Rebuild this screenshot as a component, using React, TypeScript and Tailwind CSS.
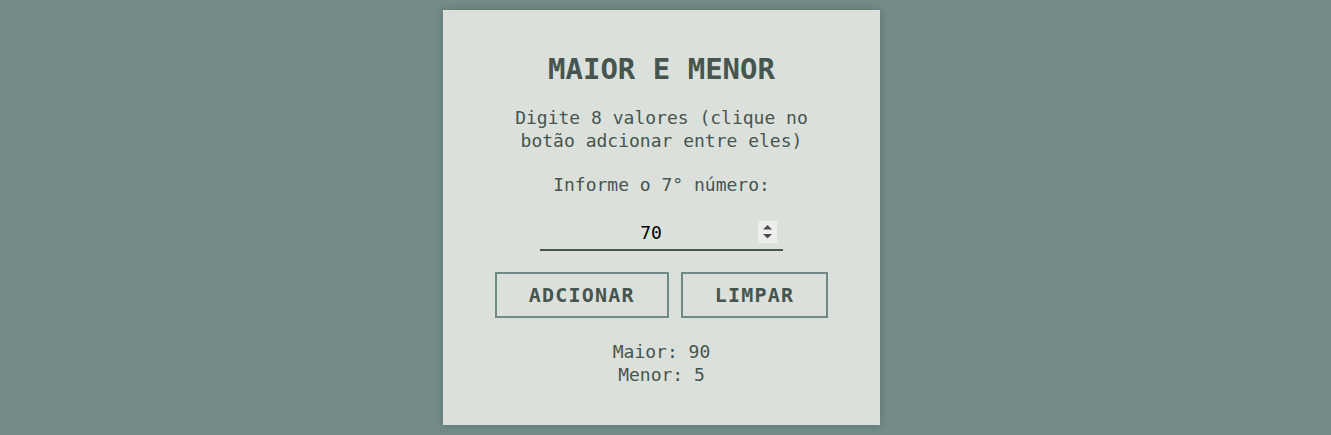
import { useState } from 'react'

const MONO = { fontFamily: '"DejaVu Sans Mono", "Liberation Mono", monospace' }

function Spinner() {
  return (
    <div className="w-[19px] h-[22px] bg-[#eeeeee] flex items-center justify-center mr-[6px] mb-[6px] shrink-0">
      <svg width="19" height="22" viewBox="0 0 19 22">
        <path d="M9.5 4 L14 8.5 L5 8.5 Z" fill="#4d4d4d" />
        <path d="M5 13 L14 13 L9.5 17.5 Z" fill="#4d4d4d" />
      </svg>
    </div>
  )
}

export default function App() {
  const [valor, setValor] = useState('70')
  const maior = 90
  const menor = 5

  return (
    <div className="min-h-screen bg-[#738c87] flex justify-center pr-2 pt-[10px]" style={MONO}>
      <div className="w-[437px] h-[415px] bg-[#dce0db] shadow-[0_0_8px_rgba(0,0,0,0.2)] flex flex-col items-center pt-[42px] text-[#46554f]">
        <h1 className="text-[29px] leading-[34px] font-bold">MAIOR E MENOR</h1>
        <p className="mt-[20px] text-[18px] leading-[23px] text-center w-[300px]">
          Digite 8 valores (clique no botão adcionar entre eles)
        </p>
        <label className="mt-[21px] text-[18px] leading-[23px]">Informe o 7° número:</label>
        <div className="mt-[25px] w-[243px] border-b-2 border-[#46554f] flex items-end">
          <input
            className="flex-1 min-w-0 bg-transparent text-center text-black text-[18px] leading-[23px] pb-[5px] pl-[4px] outline-none"
            style={MONO}
            value={valor}
            onChange={e => setValor(e.target.value)}
          />
          <Spinner />
        </div>
        <div className="mt-[21px] flex gap-[12px]">
          <button className="h-[46px] px-[32px] border-2 border-[#6f8a84] text-[20px] font-bold tracking-[1.2px] text-[#46554f]" style={MONO}>
            ADCIONAR
          </button>
          <button className="h-[46px] px-[32px] border-2 border-[#6f8a84] text-[20px] font-bold tracking-[1.2px] text-[#46554f]" style={MONO}>
            LIMPAR
          </button>
        </div>
        <div className="mt-[22px] text-[18px] leading-[23px] text-center">
          <div>Maior: {maior}</div>
          <div>Menor: {menor}</div>
        </div>
      </div>
    </div>
  )
}
